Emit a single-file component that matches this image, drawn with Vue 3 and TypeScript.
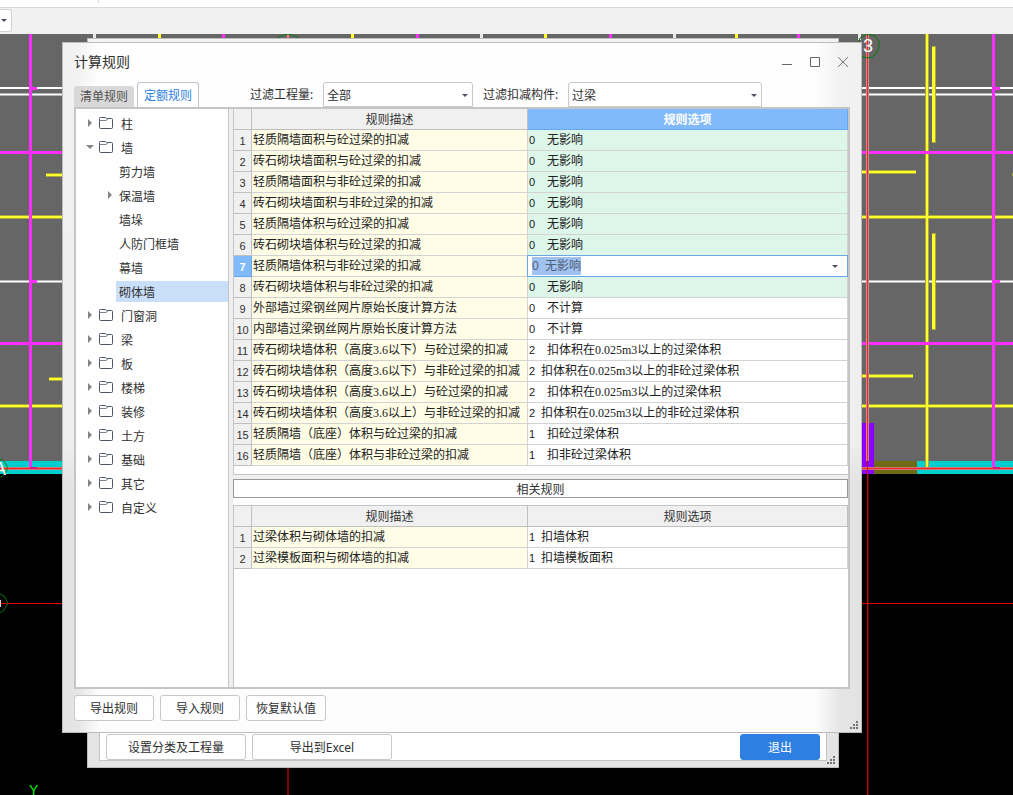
<script setup lang="ts">
import { onMounted, ref } from 'vue'

interface TreeNode {
  label: string
  level: number
  arrow: 'closed' | 'open' | 'none'
}

interface Rule {
  desc: string
  code: string
  label: string
  wide?: boolean
  same?: boolean
}

const tree: TreeNode[] = [
  { label: '柱', level: 0, arrow: 'closed' },
  { label: '墙', level: 0, arrow: 'open' },
  { label: '剪力墙', level: 1, arrow: 'none' },
  { label: '保温墙', level: 1, arrow: 'closed' },
  { label: '墙垛', level: 1, arrow: 'none' },
  { label: '人防门框墙', level: 1, arrow: 'none' },
  { label: '幕墙', level: 1, arrow: 'none' },
  { label: '砌体墙', level: 1, arrow: 'none' },
  { label: '门窗洞', level: 0, arrow: 'closed' },
  { label: '梁', level: 0, arrow: 'closed' },
  { label: '板', level: 0, arrow: 'closed' },
  { label: '楼梯', level: 0, arrow: 'closed' },
  { label: '装修', level: 0, arrow: 'closed' },
  { label: '土方', level: 0, arrow: 'closed' },
  { label: '基础', level: 0, arrow: 'closed' },
  { label: '其它', level: 0, arrow: 'closed' },
  { label: '自定义', level: 0, arrow: 'closed' },
]

const rules: Rule[] = [
  { desc: '轻质隔墙面积与砼过梁的扣减', code: '0', label: '无影响', wide: true, same: true },
  { desc: '砖石砌块墙面积与砼过梁的扣减', code: '0', label: '无影响', wide: true, same: true },
  { desc: '轻质隔墙面积与非砼过梁的扣减', code: '0', label: '无影响', wide: true, same: true },
  { desc: '砖石砌块墙面积与非砼过梁的扣减', code: '0', label: '无影响', wide: true, same: true },
  { desc: '轻质隔墙体积与砼过梁的扣减', code: '0', label: '无影响', wide: true, same: true },
  { desc: '砖石砌块墙体积与砼过梁的扣减', code: '0', label: '无影响', wide: true, same: true },
  { desc: '轻质隔墙体积与非砼过梁的扣减', code: '0', label: '无影响', wide: true, same: true },
  { desc: '砖石砌块墙体积与非砼过梁的扣减', code: '0', label: '无影响', wide: true, same: true },
  { desc: '外部墙过梁钢丝网片原始长度计算方法', code: '0', label: '不计算', wide: true },
  { desc: '内部墙过梁钢丝网片原始长度计算方法', code: '0', label: '不计算', wide: true },
  { desc: '砖石砌块墙体积（高度3.6以下）与砼过梁的扣减', code: '2', label: '扣体积在0.025m3以上的过梁体积', wide: true },
  { desc: '砖石砌块墙体积（高度3.6以下）与非砼过梁的扣减', code: '2', label: '扣体积在0.025m3以上的非砼过梁体积' },
  { desc: '砖石砌块墙体积（高度3.6以上）与砼过梁的扣减', code: '2', label: '扣体积在0.025m3以上的过梁体积', wide: true },
  { desc: '砖石砌块墙体积（高度3.6以上）与非砼过梁的扣减', code: '2', label: '扣体积在0.025m3以上的非砼过梁体积' },
  { desc: '轻质隔墙（底座）体积与砼过梁的扣减', code: '1', label: '扣砼过梁体积', wide: true },
  { desc: '轻质隔墙（底座）体积与非砼过梁的扣减', code: '1', label: '扣非砼过梁体积', wide: true },
]

const related: Rule[] = [
  { desc: '过梁体积与砌体墙的扣减', code: '1', label: '扣墙体积' },
  { desc: '过梁模板面积与砌体墙的扣减', code: '1', label: '扣墙模板面积' },
]

const selectedNode = ref('砌体墙')
const editingRow = 6
const editValue = ref('0  无影响')
const editor = ref<HTMLInputElement[]>([])

onMounted(() => {
  const field = editor.value[0]
  field?.focus()
  field?.select()
})

const topMarks = [
  { x: 94, c: '#e8e8e8' },
  { x: 159, c: '#ffff2e' },
  { x: 223, c: '#ff2eff' },
  { x: 352, c: '#ffff2e' },
  { x: 417, c: '#ff2eff' },
  { x: 481, c: '#e8e8e8' },
  { x: 545, c: '#ffff2e' },
  { x: 610, c: '#ff2eff' },
  { x: 674, c: '#e8e8e8' },
  { x: 736, c: '#ffff2e' },
  { x: 798, c: '#ff2eff' },
  { x: 859, c: '#e8e8e8' },
]
</script>

<template>
  <main class="desktop">
    <svg class="drawing" aria-hidden="true" shape-rendering="crispEdges">
      <rect x="0" y="34" width="100%" height="440" fill="#666666" />
      <rect x="0" y="461" width="70" height="13" fill="#00cdcd" />
      <rect x="874" y="461" width="43" height="13" fill="#6e6b14" />
      <rect x="917" y="461" width="100%" height="13" fill="#00cdcd" />
      <rect x="855" y="423" width="19" height="51" fill="#8b00ff" />

      <rect v-for="m in topMarks" :key="m.x" :x="m.x - 1" y="34" width="3" height="6" :fill="m.c" />

      <rect x="0" y="87" width="100%" height="2" fill="#ffffff" />
      <rect x="0" y="93" width="100%" height="3" fill="#b4b4b4" />
      <rect x="0" y="94" width="100%" height="1" fill="#ffffff" />
      <rect x="0" y="280" width="100%" height="3" fill="#b4b4b4" />
      <rect x="0" y="281" width="100%" height="1" fill="#ffffff" />

      <g fill="#a8a83a">
        <rect x="0" y="215" width="100%" height="4" />
        <rect x="0" y="404" width="100%" height="4" />
        <rect x="46" y="173" width="30" height="4" />
        <rect x="49" y="377" width="30" height="4" />
        <rect x="850" y="170" width="66" height="4" />
        <rect x="850" y="374" width="63" height="4" />
        <rect x="925" y="34" width="4" height="434" />
        <rect x="932" y="46" width="4" height="97" />
        <rect x="932" y="233" width="4" height="97" />
        <rect x="1012" y="173" width="20" height="3" />
      </g>
      <g fill="#ffff2e">
        <rect x="0" y="216" width="100%" height="2" />
        <rect x="0" y="405" width="100%" height="2" />
        <rect x="46" y="174" width="30" height="2" />
        <rect x="49" y="378" width="30" height="2" />
        <rect x="850" y="171" width="66" height="2" />
        <rect x="850" y="375" width="63" height="2" />
        <rect x="926" y="34" width="2" height="434" />
        <rect x="932" y="47" width="3" height="95" />
        <rect x="932" y="234" width="3" height="95" />
      </g>
      <g fill="#ff2eff">
        <rect x="0" y="151" width="100%" height="3" />
        <rect x="0" y="342" width="100%" height="3" />
        <rect x="29" y="34" width="3" height="434" />
        <rect x="992" y="34" width="3" height="434" />
        <rect x="32" y="87" width="5" height="3" />
        <rect x="32" y="280" width="5" height="3" />
        <rect x="995" y="87" width="5" height="3" />
        <rect x="995" y="280" width="5" height="3" />
      </g>
      <rect x="0" y="467" width="100%" height="3" fill="#c87878" />
      <rect x="0" y="468" width="100%" height="1" fill="#ff2020" />
      <rect x="30" y="467" width="7" height="2" fill="#e01080" />
      <rect x="993" y="467" width="7" height="2" fill="#e01080" />

      <rect x="866" y="34" width="3" height="427" fill="#c88a8a" />
      <rect x="867" y="34" width="1" height="427" fill="#ff2020" />
      <rect x="867" y="461" width="1" height="100%" fill="#c80000" />
      <rect x="868" y="474" width="1" height="100%" fill="#500000" />
      <rect x="0" y="603" width="100%" height="1" fill="#e60000" />
      <rect x="287" y="740" width="2" height="100%" fill="#800000" />
      <rect x="287" y="34" width="2" height="6" fill="#ff7878" />

      <g fill="none" stroke="#0a780a" shape-rendering="auto">
        <polygon points="868,34 875,36 879,41 879,48 876,54 870,58 863,57 858,52 857,45 860,38" />
        <polygon points="-2,458 4,461 8,468 4,475 -2,479 -8,475 -8,461" />
        <polygon points="-2,593 4,596 8,603 4,610 -2,614 -8,610 -8,596" />
        <path d="M278 38 L283 35 L288 34 L293 35 L298 38" />
      </g>
      <rect x="0" y="600" width="1" height="7" fill="#d0d0d0" />
      <text class="axis" x="868" y="52" text-anchor="middle">3</text>
      <text class="axis" x="-6" y="475">A</text>
      <text class="ucs" x="29" y="795">Y</text>
    </svg>

    <header class="app-strip">
      <div class="ribbon"></div>
      <div class="toolbar">
        <button class="drop" type="button" aria-label="展开"><i class="tri"></i></button>
      </div>
    </header>

    <section class="window back">
      <div class="back-panel">
        <button class="btn long" type="button">设置分类及工程量</button>
        <button class="btn long" type="button">导出到Excel</button>
        <button class="btn primary" type="button">退出</button>
      </div>
      <svg class="grip" width="8" height="8" aria-hidden="true">
        <path d="M6 0h2v2h-2zM3 3h2v2h-2zM6 3h2v2h-2zM0 6h2v2h-2zM3 6h2v2h-2zM6 6h2v2h-2z" fill="#70757c" />
      </svg>
    </section>

    <section class="window front" aria-labelledby="dlg-title">
      <div class="titlebar">
        <h1 id="dlg-title">计算规则</h1>
        <div class="controls">
          <button type="button" aria-label="最小化">
            <svg width="12" height="12"><path d="M1 8.500h10" stroke="#666" fill="none" /></svg>
          </button>
          <button type="button" aria-label="最大化">
            <svg width="12" height="12"><path d="M1.500 1.500h9v9h-9z" stroke="#666" fill="none" /></svg>
          </button>
          <button type="button" aria-label="关闭">
            <svg width="12" height="12"><path d="M1 1l10 10M11 1L1 11" stroke="#777" fill="none" /></svg>
          </button>
        </div>
      </div>

      <div class="tabrow">
        <button class="tab" type="button">清单规则</button>
        <button class="tab active" type="button">定额规则</button>
        <label class="flabel first" for="f-qty">过滤工程量:</label>
        <span class="combo qty">
          <select id="f-qty"><option>全部</option></select>
          <i class="tri"></i>
        </span>
        <label class="flabel" for="f-part">过滤扣减构件:</label>
        <span class="combo part">
          <select id="f-part"><option>过梁</option></select>
          <i class="tri"></i>
        </span>
      </div>

      <div class="body">
        <ul class="tree">
          <li v-for="n in tree" :key="n.label" :class="['node', n.level ? 'child' : 'root']">
            <span :class="['arrow', n.arrow]"></span>
            <svg v-if="n.level === 0" class="folder" width="14" height="12" aria-hidden="true">
              <path d="M.5 10.500V1.500Q.5 .5 1.500 .5H6Q7 .5 7.500 1.500H12.500Q13.500 1.500 13.500 2.500V10.500Q13.500 11.500 12.500 11.500H1.500Q.5 11.500 .5 10.500Z" fill="none" stroke="#4d566b" />
              <path d="M.5 3.500H7Q8 3.500 8.500 1.500" fill="none" stroke="#7c8394" />
            </svg>
            <button
              type="button"
              :class="['caption', { selected: selectedNode === n.label }]"
              @click="selectedNode = n.label"
            >{{ n.label }}</button>
          </li>
        </ul>

        <div class="splitter"></div>

        <div class="grids">
          <div class="grid-main">
            <table class="grid">
              <colgroup><col class="c-no" /><col class="c-desc" /><col /></colgroup>
              <thead>
                <tr><th class="no"></th><th>规则描述</th><th class="current">规则选项</th></tr>
              </thead>
              <tbody>
                <tr v-for="(r, i) in rules" :key="r.desc">
                  <th scope="row" :class="['no', { current: i === editingRow }]">{{ i + 1 }}</th>
                  <td class="desc">{{ r.desc }}</td>
                  <td v-if="i === editingRow" class="edit">
                    <div class="editor">
                      <input ref="editor" v-model="editValue" type="text" aria-label="规则选项" spellcheck="false" />
                      <i class="tri"></i>
                    </div>
                  </td>
                  <td v-else :class="['opt', { same: r.same }]">
                    <span class="code">{{ r.code }}</span><span :class="{ wide: r.wide }">{{ r.label }}</span>
                  </td>
                </tr>
              </tbody>
            </table>
          </div>
          <div class="gap"></div>
          <h2 class="related-title">相关规则</h2>
          <div class="grid-related">
            <table class="grid">
              <colgroup><col class="c-no" /><col class="c-desc" /><col /></colgroup>
              <thead>
                <tr><th class="no"></th><th>规则描述</th><th>规则选项</th></tr>
              </thead>
              <tbody>
                <tr v-for="(r, i) in related" :key="r.desc">
                  <th scope="row" class="no">{{ i + 1 }}</th>
                  <td class="desc">{{ r.desc }}</td>
                  <td class="opt"><span class="code">{{ r.code }}</span><span>{{ r.label }}</span></td>
                </tr>
              </tbody>
            </table>
          </div>
        </div>
      </div>

      <footer class="footer">
        <button class="btn" type="button">导出规则</button>
        <button class="btn" type="button">导入规则</button>
        <button class="btn" type="button">恢复默认值</button>
      </footer>
      <svg class="grip" width="8" height="8" aria-hidden="true">
        <path d="M6 0h2v2h-2zM3 3h2v2h-2zM6 3h2v2h-2zM0 6h2v2h-2zM3 6h2v2h-2zM6 6h2v2h-2z" fill="#70757c" />
      </svg>
    </section>
  </main>
</template>

<style>
body {
  background: #000;
}
</style>

<style scoped>
* {
  box-sizing: border-box;
}
.desktop {
  position: relative;
  min-height: 100vh;
  overflow: hidden;
  background: #000;
  color: #303030;
  font: 12px/20px "Noto Sans", "Noto Sans CJK SC", sans-serif;
}
button,
select,
input {
  font: inherit;
  color: inherit;
  margin: 0;
  padding: 0;
}
.drawing {
  position: absolute;
  inset: 0;
  width: 100%;
  height: 100%;
}
.axis {
  font: 18px "Liberation Sans", sans-serif;
  fill: #fff;
}
.ucs {
  font: 14px "Liberation Sans", sans-serif;
  fill: #00f000;
}
.app-strip {
  position: relative;
}
.ribbon {
  height: 8px;
  background: #fff;
  border-bottom: 1px solid #d8d8d8;
}
.ribbon::before {
  content: "";
  display: block;
  width: 98px;
  height: 3px;
  border-right: 1px solid #d8d8d8;
}
.toolbar {
  height: 26px;
  padding-top: 1px;
  background: #f1f1f1;
}
.drop {
  display: flex;
  align-items: center;
  justify-content: flex-start;
  width: 12px;
  height: 23px;
  padding-left: 1px;
  background: #fff;
  border: 1px solid #d0d0d0;
  border-left: 0;
  border-radius: 0 3px 3px 0;
}
.tri {
  flex: none;
  width: 0;
  height: 0;
  border: 3px solid transparent;
  border-top-color: #4a5264;
  border-bottom-width: 0;
}

.window {
  position: absolute;
  display: flex;
  flex-direction: column;
  padding: 0 11px;
  border: 1px solid #bcbcbc;
}
.back {
  top: 38px;
  right: 174px;
  bottom: 27px;
  left: 87px;
  padding-top: 40px;
  padding-bottom: 6px;
  background: linear-gradient(#f4f4f4 0, #e4e4e4 40px);
}
.back-panel {
  flex: 1;
  display: flex;
  align-items: flex-end;
  gap: 6px;
  padding: 0 6px;
  background: #fff;
  border: 1px solid #c2c4c6;
}
.front {
  top: 42px;
  right: 151px;
  bottom: 62px;
  left: 62px;
  padding-bottom: 11px;
  background:
    linear-gradient(rgba(255, 255, 255, 0.5) 0, rgba(255, 255, 255, 0.4) 400px, rgba(255, 255, 255, 0) 440px),
    linear-gradient(90deg, #e3e3e3 0, #e5e5e5 14px, #fdfdfd 36px, #fdfdfd calc(100% - 46px), #e5e5e5 calc(100% - 20px), #e3e3e3 100%);
}
.grip {
  position: absolute;
  right: 3px;
  bottom: 3px;
}
.titlebar {
  display: flex;
  align-items: center;
  justify-content: space-between;
  height: 39px;
  padding: 0 1px 2px 0;
}
.titlebar h1 {
  margin: 0;
  font-size: 14px;
  font-weight: 400;
}
.controls {
  display: flex;
  gap: 16px;
}
.controls button {
  display: flex;
  background: none;
  border: 0;
}
.tabrow {
  display: flex;
  align-items: flex-end;
  height: 25px;
}
.tab {
  width: 60px;
  height: 21px;
  margin-right: 3px;
  background: #d9d9d9;
  border: 0;
  border-radius: 3px 3px 0 0;
  white-space: nowrap;
  color: #505050;
}
.tab.active {
  width: 62px;
  height: 25px;
  margin-right: 51px;
  padding-top: 2px;
  background: #fff;
  border: 1px solid #bfc3cc;
  border-bottom: 0;
  color: #2d80e2;
}
.flabel {
  height: 25px;
  width: 85px;
  margin-left: 10px;
  line-height: 26px;
  white-space: nowrap;
}
.flabel.first {
  width: 73px;
  margin-left: 0;
}
.combo {
  position: relative;
  height: 25px;
}
.combo.qty {
  width: 150px;
}
.combo.part {
  width: 194px;
}
.combo select {
  display: block;
  width: 100%;
  height: 100%;
  padding: 2px 20px 0 3px;
  appearance: none;
  background: #fff;
  border: 1px solid #c8c8c8;
  border-radius: 3px 3px 0 0;
}
.combo .tri {
  position: absolute;
  top: 12px;
  right: 5px;
  pointer-events: none;
}

.body {
  flex: 1;
  display: flex;
  min-height: 0;
  background: #fff;
  border: 2px solid #c4c5c8;
}
.tree {
  width: 153px;
  margin: 0;
  padding: 2px 0;
  list-style: none;
  border-right: 1px solid #c4c5c8;
}
.node {
  display: flex;
  align-items: center;
  height: 24px;
}
.node.root {
  padding-left: 10px;
}
.node.child {
  padding-left: 30px;
}
.arrow {
  flex: none;
  width: 10px;
  height: 8px;
}
.root .arrow {
  width: 13px;
}
.arrow::before {
  content: "";
  display: block;
}
.arrow.closed::before {
  width: 0;
  margin-left: 2px;
  border: 4px solid transparent;
  border-left-color: #858585;
  border-right-width: 0;
}
.arrow.open::before {
  width: 0;
  margin-top: 2px;
  border: 4px solid transparent;
  border-top-color: #858585;
  border-bottom-width: 0;
}
.folder {
  flex: none;
  margin-right: 5px;
}
.caption {
  flex: 1;
  height: 21px;
  padding: 2px 3px 0;
  background: none;
  border: 0;
  text-align: left;
}
.caption.selected {
  background: #c9dff9;
}
.splitter {
  width: 4px;
  background: #efefef;
}
.grids {
  flex: 1;
  display: flex;
  flex-direction: column;
  min-width: 0;
}
.grid-main {
  padding-bottom: 8px;
  border: 1px solid #c4c5c8;
  border-width: 0 0 1px 1px;
}
.gap {
  height: 4px;
  background: #f0f0f0;
}
.related-title {
  height: 19px;
  margin: 0 0 7px;
  border: 1px solid #999;
  font-size: 12px;
  font-weight: 400;
  line-height: 20px;
  text-align: center;
}
.grid-related {
  flex: 1;
  border: 1px solid #c4c5c8;
  border-width: 1px 0 0 1px;
}
.grid {
  width: 100%;
  table-layout: fixed;
  border-collapse: separate;
  border-spacing: 0;
}
.c-no {
  width: 18px;
}
.c-desc {
  width: 276px;
}
.grid th,
.grid td {
  height: 21px;
  padding: 0;
  border: 1px solid #d3d3d3;
  border-width: 0 1px 1px 0;
  line-height: 18px;
  white-space: nowrap;
  font-weight: 400;
  overflow: hidden;
}
.grid th {
  padding-top: 2px;
  background: #f0f0f0;
  border-color: #c0c0c0;
}
.grid th.current {
  background: #80bafb;
  border-color: #64a8f0;
  color: #fff;
  font-weight: 700;
}
.grid td {
  font-family: "Liberation Serif", "Noto Sans CJK SC", serif;
  color: #202020;
}
.grid .no,
.grid .code {
  font-family: "Liberation Sans", sans-serif;
  font-size: 11px;
}
.grid .desc,
.grid .opt {
  padding: 0 0 1px 1px;
}
.grid .desc {
  background: #fffde6;
}
.grid .same {
  background: #ddf6ea;
}
.code {
  display: inline-block;
  width: 12px;
}
.wide {
  margin-left: 6px;
}
.grid .edit {
  overflow: visible;
}
.editor {
  position: relative;
  display: flex;
  align-items: center;
  height: 20px;
  padding: 0 9px 0 4px;
  background: #fff;
  outline: 1px solid #6ba7e6;
}
.editor input {
  flex: 1;
  min-width: 0;
  height: 18px;
  background: none;
  border: 0;
  outline: 0;
  font-family: "Noto Sans", "Noto Sans CJK SC", sans-serif;
  line-height: 18px;
}
.editor input::selection {
  background: #a0c2f0;
  color: #506078;
}

.footer {
  display: flex;
  gap: 6px;
  margin-top: 6px;
}
.btn {
  width: 80px;
  height: 26px;
  padding-top: 2px;
  background: #fff;
  border: 1px solid #c8c8c8;
  border-radius: 3px;
  white-space: nowrap;
}
.btn.long {
  width: 140px;
}
.btn.primary {
  margin-left: auto;
  background: #2d80e2;
  border-color: #2d80e2;
  color: #fff;
}
</style>
